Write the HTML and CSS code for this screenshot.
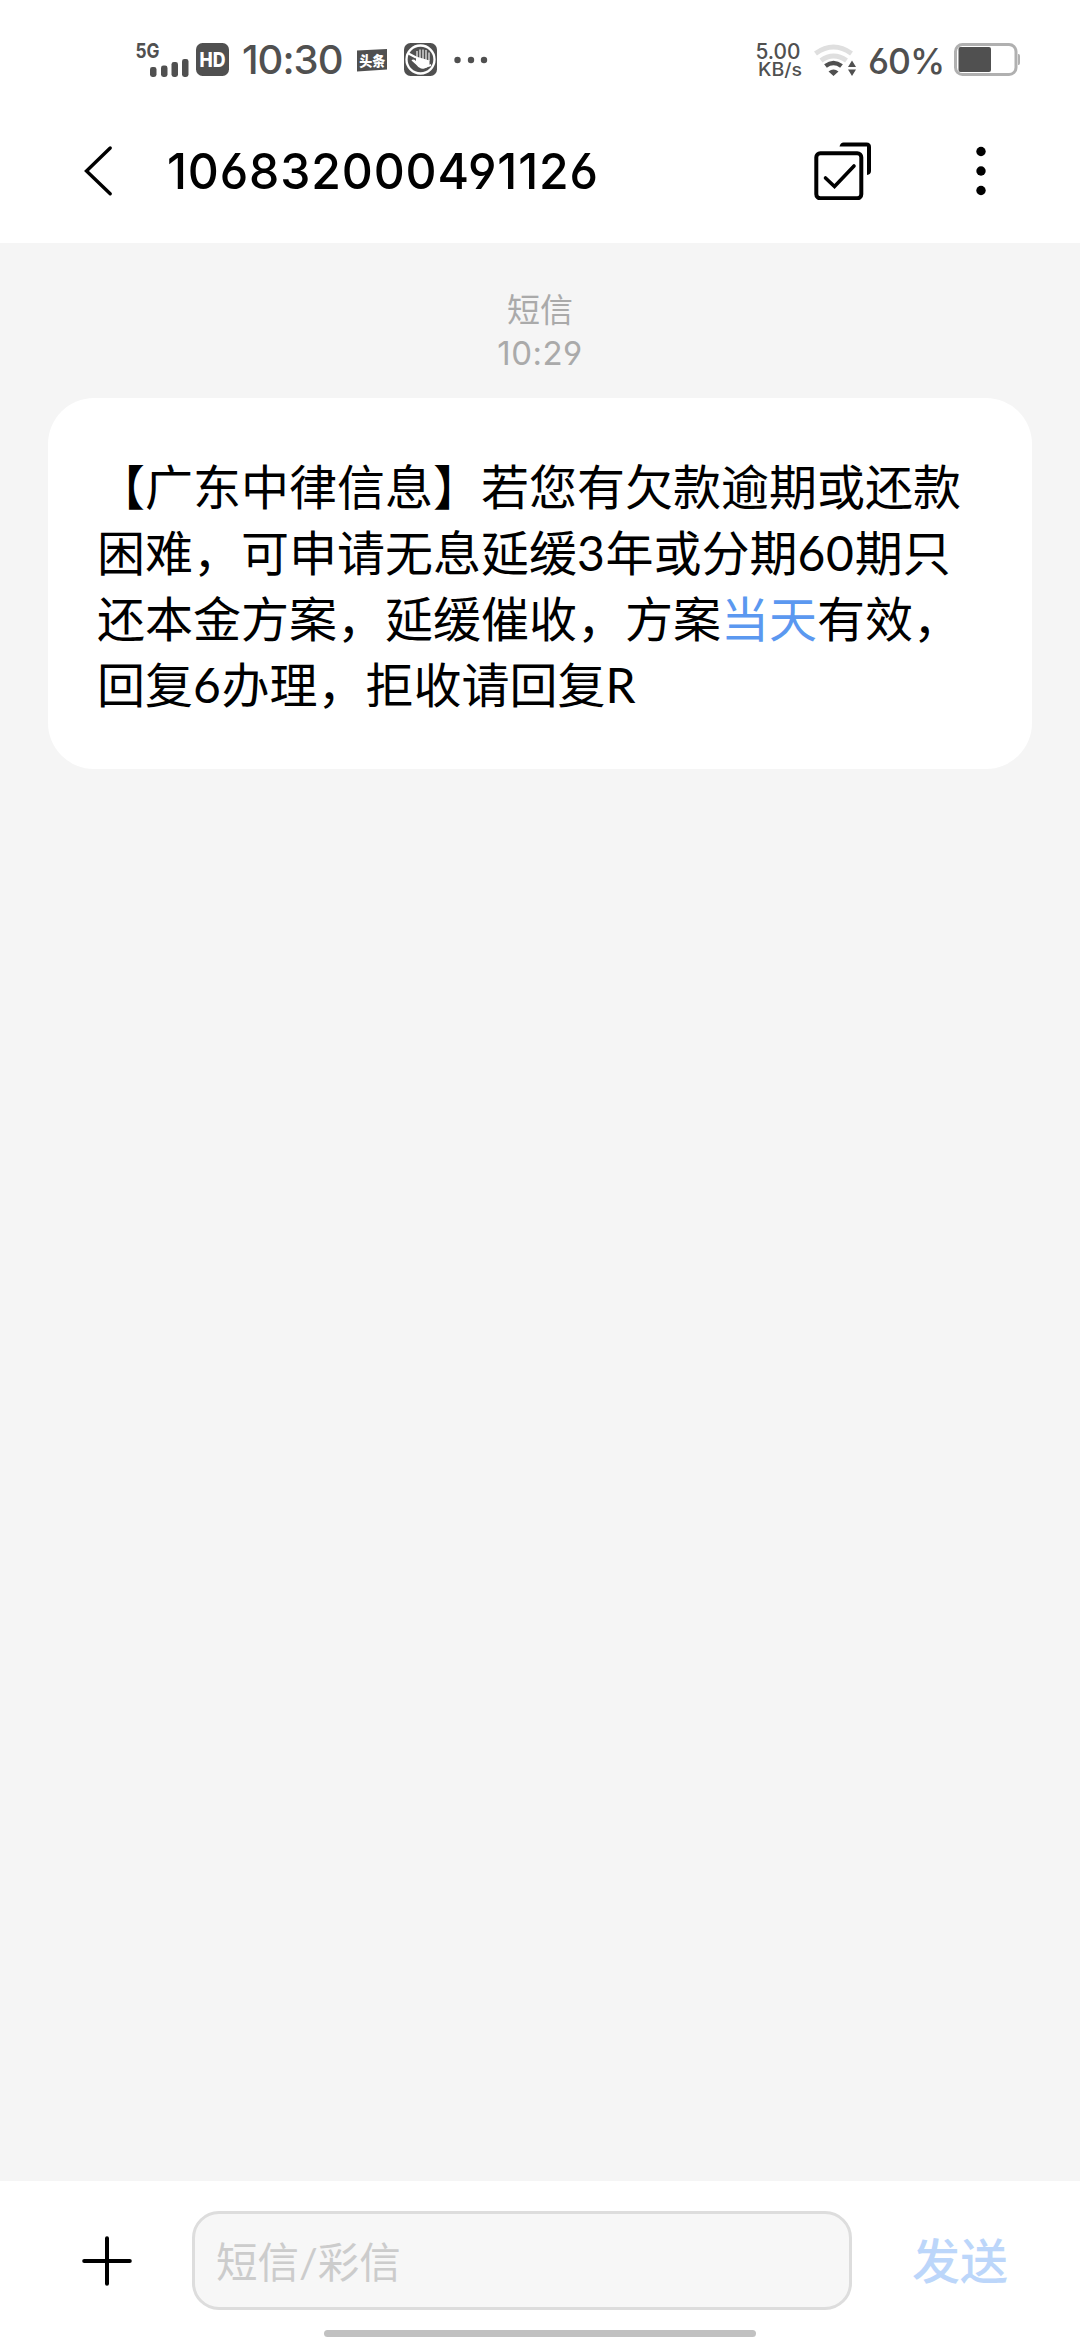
FILE: index.html
```html
<!DOCTYPE html>
<html lang="zh-CN">
<head>
<meta charset="utf-8">
<title>106832000491126</title>
<link rel="stylesheet" href="styles.css">
</head>
<body>
<div class="screen">
  <div class="status">
    <div class="status-left">
      <svg class="signal" width="55" height="46" viewBox="135 36 55 46">
        <text class="net" x="135.500" y="57" textLength="24" lengthAdjust="spacingAndGlyphs">5G</text>
        <rect x="150" y="66" width="6.500" height="10" rx="2.400"/>
        <rect x="161" y="64.500" width="6.500" height="11.500" rx="2.400"/>
        <rect x="171.500" y="61" width="6.500" height="15" rx="2.400"/>
        <rect x="182" y="58" width="6.500" height="18" rx="2.400"/>
      </svg>
      <svg class="hd" width="33" height="33" viewBox="0 0 33 33">
        <rect width="33" height="33" rx="6.500"/>
        <text class="hd-text" x="3.500" y="24" textLength="26" lengthAdjust="spacingAndGlyphs">HD</text>
      </svg>
      <div class="clock">10:30</div>
      <svg class="news" width="30" height="23" viewBox="0 0 30 23">
        <path d="M0 1.500 30 0V20.500L0 22.500Z"/>
        <text class="news-text" x="2.200" y="17" textLength="26" lengthAdjust="spacingAndGlyphs">头条</text>
      </svg>
      <svg class="hand" width="33" height="33" viewBox="0 0 33 33">
        <rect width="33" height="33" rx="6.500"/>
        <circle cx="16.500" cy="16.500" r="14" fill="none" stroke="#fff" stroke-width="2.300"/>
        <path d="M13 14V8M16 15V6.500M19 16V6.500M22 17V7M25 18V9.500" fill="none" stroke="#c4c4c4" stroke-width="1.700"/>
        <path d="M12 13.500 25.500 17.500V21Q23 26.500 17 25.500 14 24.500 12.500 22L7.500 17.500Q9 15.500 12 18Z" fill="#fff"/>
        <path d="M4.500 10.500 12 14.500M19 24.500 27 22" stroke="#fff" stroke-width="2"/>
      </svg>
      <svg class="more" width="34" height="8" viewBox="0 0 34 8">
        <circle cx="3.500" cy="4" r="3.200"/><circle cx="17" cy="4" r="3.200"/><circle cx="30" cy="4" r="3.200"/>
      </svg>
    </div>
    <div class="status-right">
      <svg class="speed" width="54" height="48" viewBox="752 36 54 48">
        <text class="speed-num" x="755.500" y="58.500" textLength="45" lengthAdjust="spacingAndGlyphs">5.00</text>
        <text class="speed-unit" x="758" y="76.300" textLength="44" lengthAdjust="spacingAndGlyphs">KB/s</text>
      </svg>
      <svg class="wifi" width="43" height="33" viewBox="813 43 43 33">
        <g fill="none">
          <path d="M815.500 53.500Q833.500 40.500 851.500 53.500" stroke="#dfdfdf" stroke-width="5"/>
          <path d="M821 60.500Q833.500 51.500 846.500 60.500" stroke="#dfdfdf" stroke-width="5"/>
          <path d="M825.500 66Q833.500 60 841.500 66" stroke="#505050" stroke-width="4.500"/>
        </g>
        <path d="M828.500 71.500Q833.500 67.500 838.500 71.500L833.500 76ZM848 67 852 60.500 856 67ZM848 69.500 852 76 856 69.500Z"/>
      </svg>
      <div class="percent">60%</div>
      <svg class="battery" width="66" height="33" viewBox="954 43 66 33">
        <rect x="955.500" y="44.500" width="60.500" height="30" rx="7" fill="none" stroke="#b0b0b0" stroke-width="3"/>
        <rect x="958.500" y="47" width="32.500" height="25" rx="2"/>
        <path d="M1018 54H1018.500Q1020 54 1020 56V63Q1020 65 1018.500 65H1018Z" fill="#b0b0b0"/>
      </svg>
    </div>
  </div>

  <div class="header">
    <svg class="back" width="30" height="52" viewBox="0 0 30 52" fill="none" stroke="#000" stroke-width="3.400" stroke-linecap="round">
      <path d="M27.200 3 3.500 26 27.200 48.800"/>
    </svg>
    <div class="title">106832000491126</div>
    <svg class="select" width="58" height="58" viewBox="0 0 58 58" fill="none" stroke="#000" stroke-width="4">
      <rect x="2.300" y="11.300" width="45" height="45" rx="4"/>
      <path d="M11.500 36 20.500 44.500 40 24" stroke-linecap="round" stroke-width="3.600"/>
      <path d="M25.500 4.500Q26.500 .500 29.500 .500H52.500Q57 .500 57 5V29Q57 32.500 53 33V4.500Z" fill="#000" stroke="none"/>
    </svg>
    <svg class="menu" width="10" height="50" viewBox="0 0 10 50">
      <circle cx="5" cy="5.500" r="4.700"/><circle cx="5" cy="25" r="4.700"/><circle cx="5" cy="44.500" r="4.700"/>
    </svg>
  </div>

  <div class="thread">
    <div class="stamp"><div>短信</div><div class="stamp-time">10:29</div></div>
    <div class="bubble">【广东中律信息】若您有欠款逾期或还款<br>困难，可申请无息延缓<span class="n">3</span>年或分期<span class="n">60</span>期只<br>还本金方案，延缓催收，方案<span class="link">当天</span>有效，<br>回复<span class="n">6</span>办理，拒收请回复<span class="n">R</span></div>
  </div>

  <div class="composer">
    <svg class="plus" width="50" height="50" viewBox="0 0 50 50" stroke="#000" stroke-width="4" stroke-linecap="round">
      <path d="M2.200 25H47.800M25 2.200V47.800"/>
    </svg>
    <div class="field">短信/彩信</div>
    <div class="send">发送</div>
    <div class="home"></div>
  </div>
</div>
</body>
</html>
```

FILE: styles.css
```css
* { box-sizing: border-box; }
body { margin: 0; background: #fff; }
svg { display: block; flex: none; }
.screen {
  width: 1080px;
  height: 2340px;
  display: flex;
  flex-direction: column;
  font-family: Inter, "Noto Sans CJK SC", sans-serif;
  font-feature-settings: "cv03", "cv04";
  color: #000;
}
.status {
  height: 119px;
  padding: 0 60px 0 135px;
  display: flex;
  justify-content: space-between;
  align-items: center;
  fill: #505050;
  color: #505050;
}
.status-left, .status-right { display: flex; align-items: center; }
.net { font-size: 20px; font-weight: 700; }
.hd { margin-left: 6px; }
.hd-text { font-size: 20px; font-weight: 800; fill: #fff; }
.clock {
  width: 115px;
  margin-left: 13px;
  font-size: 40px;
  line-height: 50px;
  font-weight: 500;
  letter-spacing: -1px;
  white-space: nowrap;
}
.news { margin-top: 2px; }
.news-text { font-family: "Noto Sans CJK SC", sans-serif; font-size: 14px; font-weight: 900; fill: #fff; }
.hand { margin-left: 17px; }
.more { margin-left: 17px; }
.speed-num { font-size: 21px; font-weight: 500; }
.speed-unit { font-size: 18px; font-weight: 500; }
.wifi { margin-left: 7px; }
.percent {
  width: 86px;
  margin: 5px 0 0 12px;
  font-size: 35.500px;
  line-height: 46px;
  font-weight: 500;
  letter-spacing: -1px;
  white-space: nowrap;
}

.header {
  height: 124px;
  padding: 0 94px 20px 83px;
  display: flex;
  align-items: center;
}
.title {
  width: 600px;
  margin-left: 54px;
  font-size: 50px;
  line-height: 60px;
  font-weight: 550;
  letter-spacing: .900px;
  transform: scaleX(.962);
  transform-origin: 0 50%;
  white-space: nowrap;
}
.select { margin-left: 47px; }
.menu { margin-left: auto; }

.thread {
  flex: 1;
  padding: 46px 48px 0;
  background: #f5f5f5;
}
.stamp {
  height: 109px;
  text-align: center;
  font-size: 33px;
  line-height: 43px;
  color: #aaa;
}
.stamp-time { letter-spacing: .500px; }
.bubble {
  height: 371px;
  padding: 53px 0 0 49px;
  border-radius: 46px;
  background: #fff;
  font-family: "Noto Sans CJK SC", sans-serif;
  font-size: 48px;
  line-height: 66px;
  white-space: nowrap;
  text-spacing-trim: space-all;
}
.n { font-family: Lato, sans-serif; line-height: 0; letter-spacing: .700px; }
.link { color: #5b98f0; }

.composer {
  position: relative;
  height: 159px;
  padding: 30px 0 30px 82px;
  display: flex;
  align-items: center;
}
.field {
  width: 660px;
  height: 99px;
  margin-left: 60px;
  padding-left: 21px;
  border: 3px solid #ddd;
  border-radius: 27px;
  background: #f7f7f7;
  color: #ccc;
  font-family: Lato, "Noto Sans CJK SC", sans-serif;
  font-size: 41.500px;
  line-height: 97px;
}
.send {
  margin: 2px 0 0 60px;
  color: #bcd6fa;
  font-size: 48px;
  line-height: 66px;
  font-weight: 500;
}
.home {
  position: absolute;
  left: 324px;
  bottom: 3px;
  width: 432px;
  height: 7px;
  border-radius: 4px;
  background: #c1c1c1;
}
```
